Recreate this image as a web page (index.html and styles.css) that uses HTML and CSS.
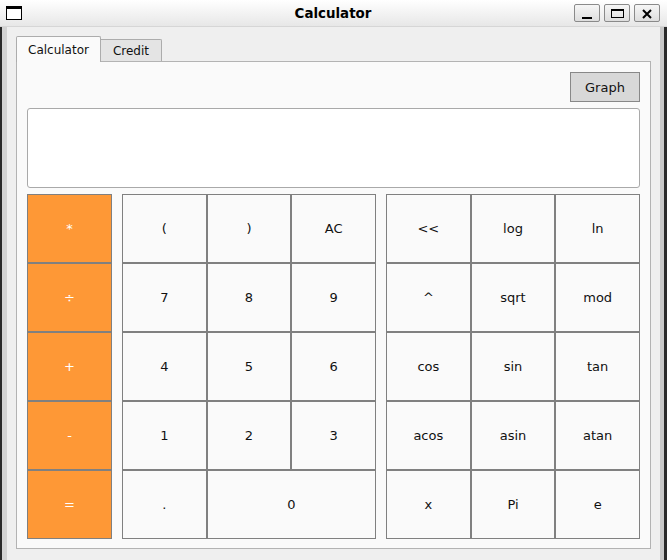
FILE: index.html
```html
<!DOCTYPE html>
<html>
<head>
<meta charset="utf-8">
<title>Calculator</title>
<link rel="stylesheet" href="styles.css">
</head>
<body>
<div class="window">
  <div class="titlebar">
    <div class="tb-left">
      <svg class="appicon" width="16" height="14" viewBox="0 0 16 14"><rect x="0.5" y="0.5" width="15" height="13" fill="#fff" stroke="#000"/><rect x="0" y="0" width="16" height="3" fill="#000"/></svg>
    </div>
    <div class="title">Calculator</div>
    <div class="wbtns">
      <div class="wbtn"><svg width="24" height="16" viewBox="0 0 24 16"><rect x="7" y="12" width="10" height="2" fill="#000"/></svg></div>
      <div class="wbtn"><svg width="24" height="16" viewBox="0 0 24 16"><rect x="6.5" y="4.5" width="12" height="8" fill="none" stroke="#000"/><rect x="6" y="4" width="13" height="2" fill="#000"/></svg></div>
      <div class="wbtn"><svg width="24" height="16" viewBox="0 0 24 16"><path d="M8 5 L16 13 M16 5 L8 13" stroke="#000" stroke-width="2"/></svg></div>
    </div>
  </div>
  <div class="body">
    <div class="inner">
      <div class="tabs">
        <div class="tab active">Calculator</div>
        <div class="tab">Credit</div>
      </div>
      <div class="pane">
        <div class="toprow"><div class="graph">Graph</div></div>
        <div class="display"></div>
        <div class="keypad">
          <div class="ops">
            <div class="key op">*</div>
            <div class="key op">÷</div>
            <div class="key op">+</div>
            <div class="key op">-</div>
            <div class="key op">=</div>
          </div>
          <div class="grid">
            <div class="key">(</div>
            <div class="key">)</div>
            <div class="key">AC</div>
            <div class="key">7</div>
            <div class="key">8</div>
            <div class="key">9</div>
            <div class="key">4</div>
            <div class="key">5</div>
            <div class="key">6</div>
            <div class="key">1</div>
            <div class="key">2</div>
            <div class="key">3</div>
            <div class="key">.</div>
            <div class="key span2">0</div>
          </div>
          <div class="grid">
            <div class="key">&lt;&lt;</div>
            <div class="key">log</div>
            <div class="key">ln</div>
            <div class="key">^</div>
            <div class="key">sqrt</div>
            <div class="key">mod</div>
            <div class="key">cos</div>
            <div class="key">sin</div>
            <div class="key">tan</div>
            <div class="key">acos</div>
            <div class="key">asin</div>
            <div class="key">atan</div>
            <div class="key">x</div>
            <div class="key">Pi</div>
            <div class="key">e</div>
          </div>
        </div>
      </div>
    </div>
  </div>
</div>
</body>
</html>
```

FILE: styles.css
```css
* { box-sizing: border-box; }
html, body { margin: 0; padding: 0; }
body {
  width: 667px;
  height: 560px;
  overflow: hidden;
  font-family: "DejaVu Sans", sans-serif;
  color: #111;
  background: #efefef;
}
.window {
  display: flex;
  flex-direction: column;
  height: 560px;
}
.titlebar {
  flex: none;
  height: 27px;
  display: grid;
  grid-template-columns: 1fr auto 1fr;
  align-items: center;
  padding: 0 7px 0 6px;
  background: linear-gradient(#ffffff, #e7e7e7);
  border-bottom: 1px solid #d6d6d6;
}
.tb-left { display: flex; align-items: center; }
.appicon { display: block; }
.title {
  font-weight: bold;
  font-size: 13.4px;
  color: #000;
}
.wbtns {
  justify-self: end;
  display: flex;
  gap: 4px;
}
.wbtn {
  width: 26px;
  height: 18px;
  border: 1px solid #8a8a8a;
  border-radius: 2px;
  background: linear-gradient(#f6f6f6, #dedede);
  display: flex;
  align-items: center;
  justify-content: center;
}
.wbtn svg { display: block; }
.body {
  flex: 1;
  display: flex;
  border-left: 2px solid #2a2a2a;
  border-right: 3px solid #2a2a2a;
}
.inner {
  flex: 1;
  display: flex;
  flex-direction: column;
  border-left: 5px solid #d3d3d3;
  border-right: 4px solid #c8c8c8;
  background: #efefef;
  padding: 9px 9px 11px 9px;
}
.tabs {
  display: flex;
  align-items: flex-end;
  height: 25px;
  flex: none;
}
.tab {
  font-size: 12px;
  height: 22px;
  padding: 0 12px 0 12px;
  display: flex;
  align-items: center;
  background: #e4e4e4;
  border: 1px solid #acacac;
  border-bottom: none;
  border-left: none;
  border-radius: 0 2px 0 0;
  color: #111;
}
.tab.active {
  height: 26px;
  margin-bottom: -1px;
  position: relative;
  z-index: 1;
  background: #fafafa;
  border-left: 1px solid #acacac;
  border-radius: 2px 2px 0 0;
  padding: 0 11px 0 11px;
}
.pane {
  height: 488px;
  flex: none;
  background: #fafafa;
  border: 1px solid #b3b3b3;
  padding: 10px 10px 9px 10px;
  display: flex;
  flex-direction: column;
  gap: 6px;
}
.toprow {
  display: flex;
  justify-content: flex-end;
}
.graph {
  width: 70px;
  height: 30px;
  background: #d8d8d8;
  border: 1px solid #888;
  font-size: 13px;
  display: flex;
  align-items: center;
  justify-content: center;
  color: #111;
}
.display {
  height: 80px;
  background: #fff;
  border: 1px solid #a9a9a9;
  border-radius: 3px;
}
.keypad {
  height: 345px;
  display: flex;
  gap: 10px;
}
.ops {
  width: 85px;
  display: grid;
  grid-template-rows: repeat(5, 1fr);
}
.grid {
  width: 254px;
  display: grid;
  grid-template-columns: repeat(3, 1fr);
  grid-template-rows: repeat(5, 1fr);
}
.key {
  border: 1px solid #808080;
  background: #fafafa;
  font-size: 13px;
  display: flex;
  align-items: center;
  justify-content: center;
  color: #111;
}
.key.op {
  background: #fe9836;
  color: #fff;
}
.span2 { grid-column: span 2; }
```
